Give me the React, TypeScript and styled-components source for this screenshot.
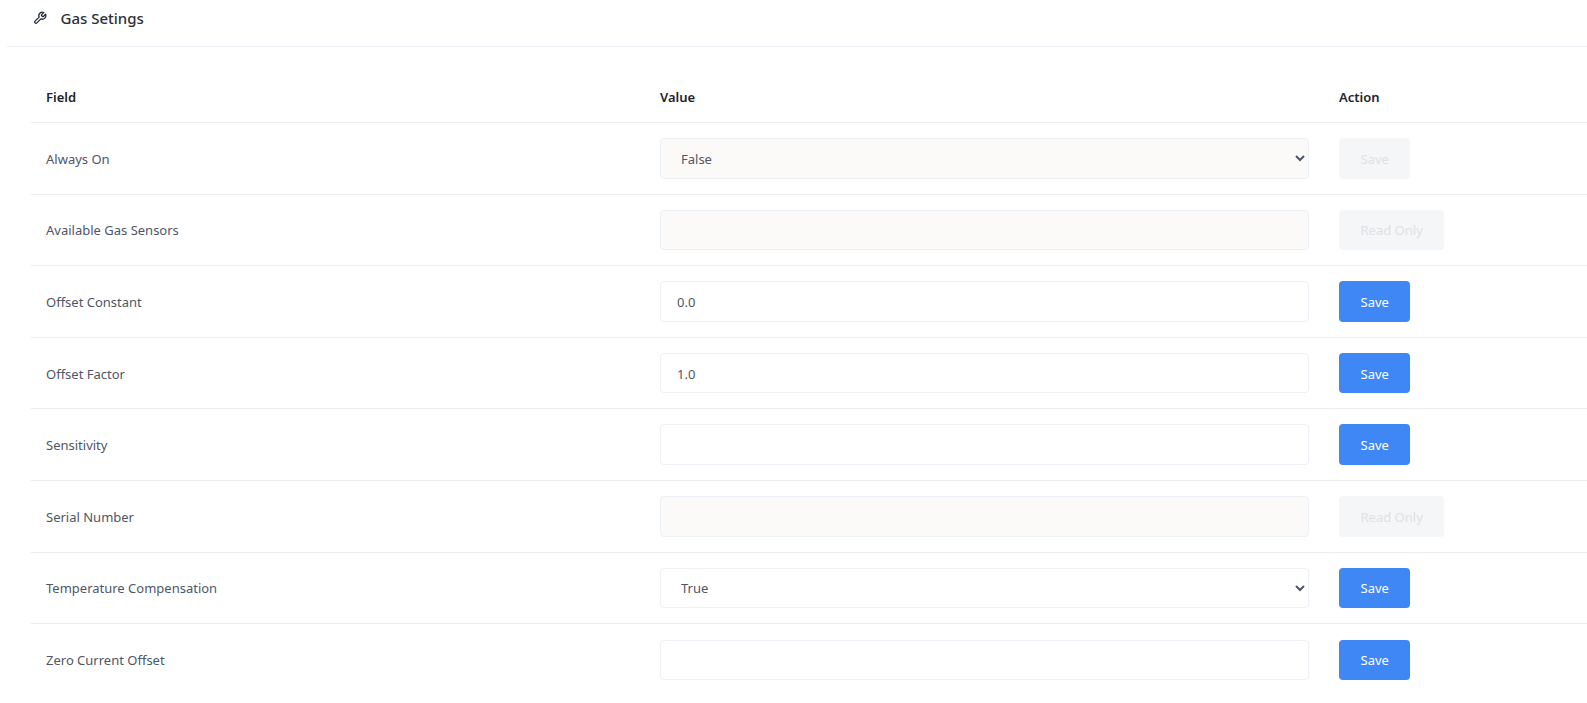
import { createGlobalStyle } from 'styled-components';
import styled from 'styled-components';

type Field = {
  name: string;
  kind: 'select' | 'input';
  value?: string;
  readOnly?: boolean;
  action: string;
  disabled?: boolean;
};

const fields: Field[] = [
  { name: 'Always On', kind: 'select', value: 'False', readOnly: true, action: 'Save', disabled: true },
  { name: 'Available Gas Sensors', kind: 'input', readOnly: true, action: 'Read Only', disabled: true },
  { name: 'Offset Constant', kind: 'input', value: '0.0', action: 'Save' },
  { name: 'Offset Factor', kind: 'input', value: '1.0', action: 'Save' },
  { name: 'Sensitivity', kind: 'input', action: 'Save' },
  { name: 'Serial Number', kind: 'input', readOnly: true, action: 'Read Only', disabled: true },
  { name: 'Temperature Compensation', kind: 'select', value: 'True', action: 'Save' },
  { name: 'Zero Current Offset', kind: 'input', action: 'Save' },
];

export default function App() {
  return (
    <>
      <GlobalStyle />
      <Page>
        <Header>
          <WrenchIcon viewBox="0 0 24 24">
            <path d="M14.7 6.3a1 1 0 0 0 0 1.4l1.6 1.6a1 1 0 0 0 1.4 0l3.77-3.77a6 6 0 0 1-7.94 7.94l-6.91 6.91a2.12 2.12 0 0 1-3-3l6.91-6.91a6 6 0 0 1 7.94-7.94l-3.76 3.76z" />
          </WrenchIcon>
          <Title>Gas Setings</Title>
        </Header>
        <Table>
          <HeadRow>
            <HeadCell>Field</HeadCell>
            <HeadCell>Value</HeadCell>
            <HeadCell>Action</HeadCell>
          </HeadRow>
          {fields.map((field) => (
            <Row key={field.name}>
              <Label>{field.name}</Label>
              <ValueCell>
                {field.kind === 'select' ? (
                  <Select $muted={field.readOnly} value={field.value} disabled={field.readOnly} onChange={() => {}}>
                    <option>True</option>
                    <option>False</option>
                  </Select>
                ) : (
                  <Input $muted={field.readOnly} defaultValue={field.value} readOnly={field.readOnly} />
                )}
              </ValueCell>
              <ActionCell>
                <Button $disabled={field.disabled}>{field.action}</Button>
              </ActionCell>
            </Row>
          ))}
        </Table>
      </Page>
    </>
  );
}

const GlobalStyle = createGlobalStyle`
  html, body {
    margin: 0;
    padding: 0;
    background: #fff;
    overflow: hidden;
  }
  body {
    font-family: "Noto Sans", "Open Sans", sans-serif;
    font-size: 13px;
  }
`;

const Page = styled.div`
  width: 1587px;
  height: 703px;
  padding-left: 7px;
  box-sizing: border-box;
  overflow: hidden;
`;

const Header = styled.div`
  height: 47px;
  padding: 0 0 10px 26px;
  box-sizing: border-box;
  border-bottom: 1px solid #edf0f5;
  display: flex;
  align-items: center;
  gap: 13.5px;
`;

const WrenchIcon = styled.svg`
  width: 14px;
  height: 14px;
  fill: none;
  stroke: #1f2937;
  stroke-width: 2.2;
  stroke-linecap: round;
  stroke-linejoin: round;
`;

const Title = styled.h1`
  margin: 0;
  font-size: 15px;
  line-height: 20px;
  font-weight: 500;
  color: #2b2f38;
`;

const Table = styled.div`
  margin: 25px 0 0 24px;
`;

const HeadRow = styled.div`
  display: grid;
  grid-template-columns: 613.5px 679px 1fr;
  align-items: center;
  box-sizing: border-box;
  border-bottom: 1px solid #ebedf0;
  height: 51px;
`;

const HeadCell = styled.div`
  padding-left: 15px;
  font-size: 13px;
  font-weight: 600;
  color: #212529;

  & + & {
    padding-left: 15.5px;
  }
`;

const Row = styled.div`
  display: grid;
  grid-template-columns: 613.5px 679px 1fr;
  align-items: center;
  box-sizing: border-box;
  border-bottom: 1px solid #ebedf0;
  height: 71.6px;

  &:last-child {
    border-bottom: none;
  }
`;

const Label = styled.div`
  padding: 1px 0 0 15px;
  font-size: 13px;
  color: #505666;
`;

const ValueCell = styled.div`
  padding: 0 14.5px 0 15.5px;
`;

const ActionCell = styled.div`
  padding-left: 15.5px;
  display: flex;
`;

const Input = styled.input<{ $muted?: boolean }>`
  display: block;
  width: 100%;
  height: 40.5px;
  box-sizing: border-box;
  padding: 1px 16px 0;
  border: 1px solid #edf0f7;
  border-radius: 4px;
  outline: none;
  background: ${(p) => (p.$muted ? '#fbfaf9' : '#fff')};
  font-family: inherit;
  font-size: 13px;
  color: #505666;
`;

const Select = styled.select<{ $muted?: boolean }>`
  display: block;
  width: 100%;
  height: 40.5px;
  box-sizing: border-box;
  padding: 1px 14px 0 16px;
  border: 1px solid #edf0f7;
  border-radius: 4px;
  outline: none;
  opacity: 1;
  background: ${(p) => (p.$muted ? '#fbfaf9' : '#fff')};
  font-family: inherit;
  font-size: 13px;
  color: #505666;
`;

const Button = styled.div<{ $disabled?: boolean }>`
  height: 40.5px;
  padding: 1px 21.5px 0;
  box-sizing: border-box;
  display: flex;
  align-items: center;
  border-radius: 4px;
  font-size: 13px;
  background: ${(p) => (p.$disabled ? '#f5f6f7' : '#3f87f5')};
  color: ${(p) => (p.$disabled ? '#dfe1e4' : '#fff')};
`;
